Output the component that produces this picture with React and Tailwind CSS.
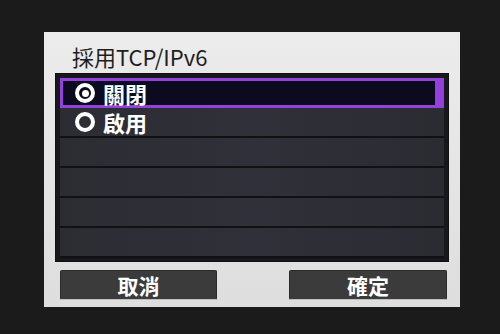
const ROWS = [
  { label: "關閉", selected: true },
  { label: "啟用", selected: false },
  { label: "" },
  { label: "" },
  { label: "" },
  { label: "" },
];

const font = { fontFamily: '"Noto Sans CJK TC", "Noto Sans", sans-serif' };

function Radio({ on }) {
  return (
    <span className="flex h-[20px] w-[20px] shrink-0 items-center justify-center rounded-full border-[4px] border-white">
      {on && <span className="h-[7px] w-[7px] rounded-full bg-white" />}
    </span>
  );
}

export default function App() {
  return (
    <div className="h-[334px] w-[500px] bg-[#1b1b1b] pl-[44px] pt-[32px]" style={font}>
      <div className="flex h-[275px] w-[416px] flex-col bg-gradient-to-b from-[#ececec] to-[#dedede]">
        <div className="flex h-[41px] items-center pl-[28px] pt-[6px] text-[22px] leading-none text-[#1e1e1e]">
          採用TCP/IPv6
        </div>

        <div className="ml-[11px] flex h-[189px] w-[394px] flex-col border border-[#101012] bg-[#18181c] pl-[4px] pt-[4px]">
          {ROWS.map((r, i) =>
            r.selected ? (
              <div
                key={i}
                className="flex h-[30px] w-[384px] items-center gap-[8px] border-y-[3px] border-l-[3px] border-r-[9px] border-[#9340dc] bg-[#0c0a1e] pl-[12px] text-[22px] font-bold leading-none text-white"
              >
                <Radio on />
                <span className="pb-[1px]">{r.label}</span>
              </div>
            ) : (
              <div
                key={i}
                className="flex h-[30px] w-[384px] items-center gap-[8px] border-b-2 border-[#111114] bg-gradient-to-r from-[#2c2c33] via-[#30303a] to-[#2b2b32] pl-[15px] text-[22px] font-bold leading-none text-white"
              >
                {r.label && <Radio on={false} />}
                {r.label && <span className="pb-[1px]">{r.label}</span>}
              </div>
            )
          )}
        </div>

        <div className="mt-[8px] flex pl-[16px]">
          <div className="flex h-[30px] w-[157px] items-center justify-center rounded-[2px] border border-[#2a2a2a] border-b-[#bdbdbd] bg-[#3b3b3b] text-[21px] font-bold leading-none text-white">
            取消
          </div>
          <div className="ml-[72px] flex h-[30px] w-[158px] items-center justify-center rounded-[2px] border border-[#2a2a2a] border-b-[#bdbdbd] bg-[#3b3b3b] text-[21px] font-bold leading-none text-white">
            確定
          </div>
        </div>
      </div>
    </div>
  );
}
